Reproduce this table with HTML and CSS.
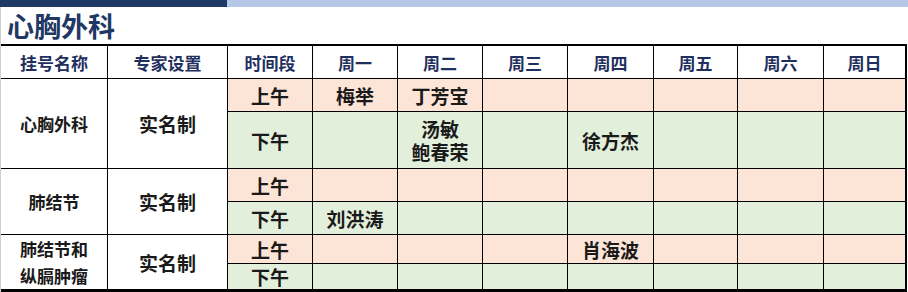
FILE: index.html
```html
<!DOCTYPE html>
<html lang="zh-CN">
<head>
<meta charset="utf-8">
<title>心胸外科</title>
<link rel="stylesheet" href="styles.css">
</head>
<body>
<div class="topbar"><div class="bar-dark"></div><div class="bar-light"></div></div>
<div class="page">
  <h1 class="title">心胸外科</h1>
  <div class="schedule">
    <div class="cell head">挂号名称</div>
    <div class="cell head">专家设置</div>
    <div class="cell head">时间段</div>
    <div class="cell head">周一</div>
    <div class="cell head">周二</div>
    <div class="cell head">周三</div>
    <div class="cell head">周四</div>
    <div class="cell head">周五</div>
    <div class="cell head">周六</div>
    <div class="cell head">周日</div>

    <div class="cell name span2">心胸外科</div>
    <div class="cell type span2">实名制</div>
    <div class="cell am big">上午</div>
    <div class="cell am big">梅举</div>
    <div class="cell am big">丁芳宝</div>
    <div class="cell am"></div>
    <div class="cell am"></div>
    <div class="cell am"></div>
    <div class="cell am"></div>
    <div class="cell am"></div>
    <div class="cell pm big">下午</div>
    <div class="cell pm"></div>
    <div class="cell pm big multi">汤敏<br>鲍春荣</div>
    <div class="cell pm"></div>
    <div class="cell pm big">徐方杰</div>
    <div class="cell pm"></div>
    <div class="cell pm"></div>
    <div class="cell pm"></div>

    <div class="cell name span2">肺结节</div>
    <div class="cell type span2">实名制</div>
    <div class="cell am big">上午</div>
    <div class="cell am"></div>
    <div class="cell am"></div>
    <div class="cell am"></div>
    <div class="cell am"></div>
    <div class="cell am"></div>
    <div class="cell am"></div>
    <div class="cell am"></div>
    <div class="cell pm big">下午</div>
    <div class="cell pm big">刘洪涛</div>
    <div class="cell pm"></div>
    <div class="cell pm"></div>
    <div class="cell pm"></div>
    <div class="cell pm"></div>
    <div class="cell pm"></div>
    <div class="cell pm"></div>

    <div class="cell name span2 twoline">肺结节和<br>纵膈肿瘤</div>
    <div class="cell type span2">实名制</div>
    <div class="cell am big">上午</div>
    <div class="cell am"></div>
    <div class="cell am"></div>
    <div class="cell am"></div>
    <div class="cell am big">肖海波</div>
    <div class="cell am"></div>
    <div class="cell am"></div>
    <div class="cell am"></div>
    <div class="cell pm big">下午</div>
    <div class="cell pm"></div>
    <div class="cell pm"></div>
    <div class="cell pm"></div>
    <div class="cell pm"></div>
    <div class="cell pm"></div>
    <div class="cell pm"></div>
    <div class="cell pm"></div>
  </div>
</div>
</body>
</html>
```
FILE: styles.css
```css
* { box-sizing: border-box; }
html, body { margin: 0; padding: 0; background: #ffffff; }
body {
  width: 908px;
  height: 292px;
  overflow: hidden;
  font-family: "Noto Sans CJK SC", "Noto Sans", sans-serif;
}
.topbar { display: flex; height: 7px; }
.bar-dark { width: 227px; background: #203864; }
.bar-light { flex: 1; background: #b4c7e7; }
.page {
  border-left: 1px solid #cfcfcf;
  height: 285px;
}
.title {
  margin: 0;
  height: 37px;
  padding-left: 6px;
  font-size: 27px;
  line-height: 37px;
  font-weight: 700;
  color: #1f3864;
}
.schedule {
  width: 906px;
  display: grid;
  grid-template-columns: 106px 119px 84px 84px 84px 84px 85px 83px 85px 81px;
  grid-template-rows: 32px 32px 56px 32px 32px 28px 25px;
  gap: 1px;
  background: #000;
  border-top: 2px solid #000;
  border-bottom: 3px solid #000;
  border-right: 2px solid #000;
}
.cell {
  display: flex;
  align-items: center;
  justify-content: center;
  text-align: center;
  background: #fff;
  font-weight: 700;
  color: #1a1a1a;
  font-size: 17px;
}
.head { color: #1f3060; font-size: 17px; }
.span2 { grid-row: span 2; }
.type { font-size: 19px; }
.twoline { line-height: 27px; }
.big { font-size: 19px; }
.multi { line-height: 23px; }
.am { background: #fce4d6; }
.pm { background: #e2efda; }
```
